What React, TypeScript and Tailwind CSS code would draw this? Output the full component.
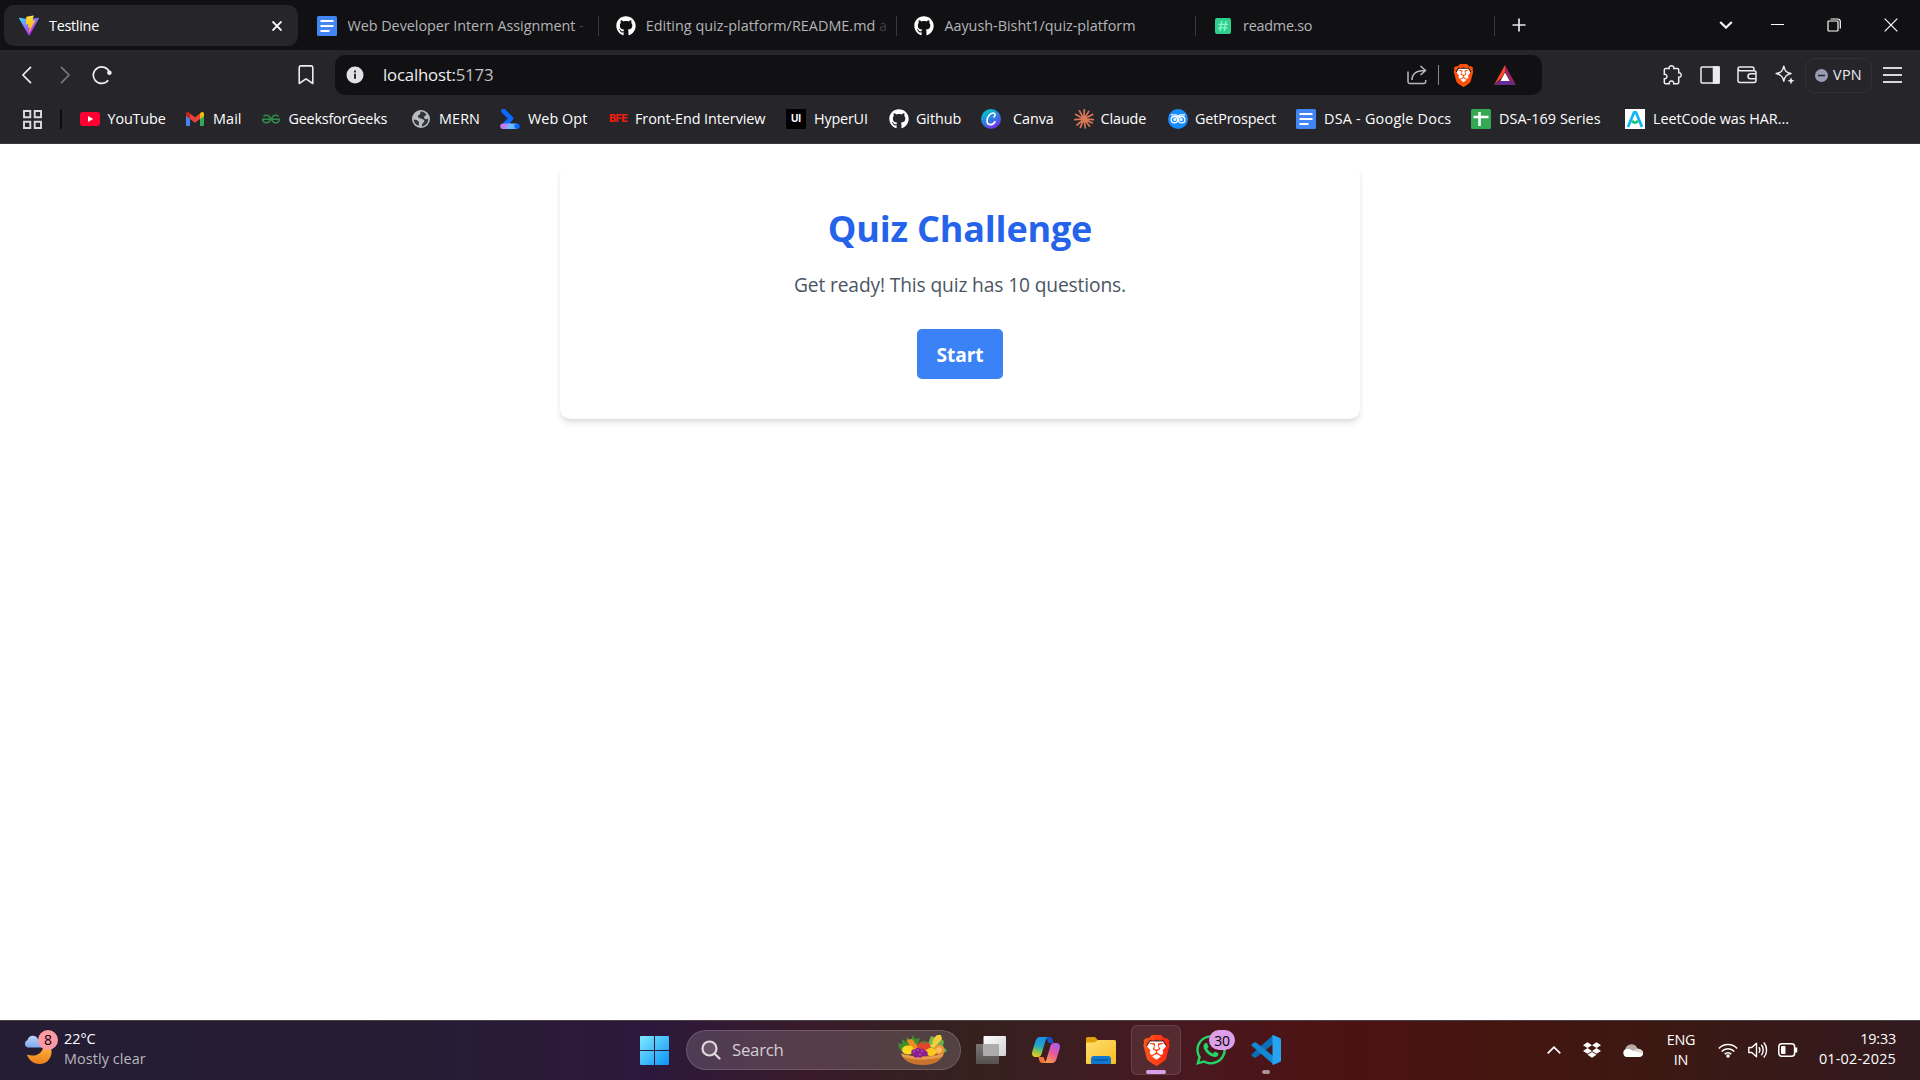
import React from 'react';
import { FaGithub, FaWhatsapp } from 'react-icons/fa';
import { SiBrave, SiDropbox, SiGeeksforgeeks } from 'react-icons/si';

const svgBase = { fill: 'none', stroke: 'currentColor' } as const;

function ViteLogo() {
  return (
    <svg viewBox="0 0 256 257" className="w-5 h-[23px] shrink-0">
      <defs>
        <linearGradient id="viteA" x1="0" x2="0.6" y1="0.1" y2="0.8">
          <stop offset="0" stopColor="#41D1FF" />
          <stop offset="1" stopColor="#BD34FE" />
        </linearGradient>
        <linearGradient id="viteB" x1="0.4" x2="0.5" y1="0" y2="1">
          <stop offset="0" stopColor="#FFEA83" />
          <stop offset="0.1" stopColor="#FFDD35" />
          <stop offset="1" stopColor="#FFA800" />
        </linearGradient>
      </defs>
      <path fill="url(#viteA)" d="M255.153 37.938 134.897 252.976c-2.483 4.44-8.862 4.466-11.382.048L.875 37.958c-2.746-4.814 1.371-10.646 6.827-9.67l120.385 21.517a6.537 6.537 0 0 0 2.322-.004l117.867-21.483c5.438-.991 9.574 4.796 6.877 9.62Z" />
      <path fill="url(#viteB)" d="M185.432.063 96.44 17.501a3.268 3.268 0 0 0-2.634 3.014l-5.474 92.456a3.268 3.268 0 0 0 3.997 3.378l24.777-5.718c2.318-.535 4.413 1.507 3.936 3.838l-7.361 36.047c-.495 2.426 1.782 4.5 4.151 3.78l15.304-4.649c2.372-.72 4.652 1.36 4.15 3.788l-11.698 56.621c-.732 3.542 3.979 5.473 5.943 2.437l1.313-2.028 72.516-144.72c1.215-2.423-.88-5.186-3.54-4.672l-25.505 4.922c-2.396.462-4.435-1.77-3.759-4.114l16.646-57.705c.677-2.35-1.37-4.583-3.769-4.113Z" />
    </svg>
  );
}

function DocsIcon() {
  return (
    <svg viewBox="0 0 20 20" className="size-5 shrink-0">
      <rect width="20" height="20" rx="1.5" fill="#4285f4" />
      <path d="M3.5 5h13M3.5 10h13M3.5 15h9" stroke="#fff" strokeWidth="2.2" />
    </svg>
  );
}

function ReadmeIcon() {
  return (
    <svg viewBox="0 0 16 16" className="size-4 shrink-0">
      <rect width="16" height="16" rx="2" fill="#2fd08f" />
      <path d="M6.7 3 5 13M11 3 9.3 13M3.5 6.3h9.3M3 9.8h9.3" stroke="#8ff5cb" strokeWidth="1.3" />
    </svg>
  );
}

function YouTubeIcon() {
  return (
    <svg viewBox="0 0 20 14" className="w-5 h-3.5 shrink-0">
      <rect width="20" height="14" rx="3" fill="#ff0033" />
      <path d="M8 4v6l5.2-3z" fill="#fff" />
    </svg>
  );
}

function GmailIcon() {
  return (
    <svg viewBox="0 0 18 14" className="w-[18px] h-3.5 shrink-0">
      <path d="M0 3v9.7c0 .7.5 1.3 1.3 1.3H4V6z" fill="#4285f4" />
      <path d="M18 3v9.7c0 .7-.5 1.3-1.3 1.3H14V6z" fill="#34a853" />
      <path d="M14 1.5V7l4-3V2c0-2-2-2.5-3.3-1.3z" fill="#fbbc04" />
      <path d="M4 7V1.5l5 3.8 5-3.8V7l-5 3.8z" fill="#ea4335" />
      <path d="M0 2v2l4 3V1.5L3.3.7C2-.5 0 0 0 2z" fill="#c5221f" />
    </svg>
  );
}

function GlobeIcon() {
  return (
    <svg viewBox="0 0 18 18" className="size-[18px] shrink-0">
      <circle cx="9" cy="9" r="9" fill="#b8bbbf" />
      <path d="M9 1.6C7.5 3 9 4.5 7 5c-1.6.4-1.3 2-.3 2.8C8 8.8 10.5 8.6 12 10c1.2 1.2-.5 2.5-1.5 3.6-.7.8-.5 2-.3 2.9 4-1 6.4-4.3 6-8-1.5 1-3.5.9-4-.5-.5-1.5 1-2.5 2.3-2.9C13.5 3 11.5 1.7 9 1.6z" fill="#34353a" />
      <path d="M1.7 9.5c2 .1 4.2.8 5 2.2.6 1 .2 2.8-.2 4C3.5 14.8 1.7 12.4 1.7 9.5z" fill="#34353a" />
    </svg>
  );
}

function WebOptIcon() {
  return (
    <svg viewBox="0 0 20 20" className="size-5 shrink-0">
      <path d="M3.5 2 11 9.500 5.5 15" fill="none" stroke="#0b6bff" strokeWidth="4.6" strokeLinejoin="round" strokeLinecap="round" />
      <path d="M3 14.500h8V20H3a2.750 2.750 0 0 1 0-5.500z" fill="#c77af5" />
      <path d="M8 14.500h9V20H6z" fill="#6cb9ff" />
      <circle cx="17" cy="17.300" r="2.700" fill="#0b6bff" />
    </svg>
  );
}

function BfeIcon() {
  return <span className="w-5 shrink-0 font-['Inter'] text-[10.5px] font-extrabold tracking-[-0.5px] text-[#f01c0c] leading-5">BFE</span>;
}

function HyperIcon() {
  return <span className="flex size-5 shrink-0 items-center justify-center bg-black font-['Inter'] text-[10px] font-bold text-white">UI</span>;
}

function CanvaIcon() {
  return (
    <svg viewBox="0 0 20 20" className="size-5 shrink-0">
      <defs>
        <linearGradient id="canva" x1="0.2" y1="0.1" x2="0.7" y2="1">
          <stop offset="0" stopColor="#00c4cc" />
          <stop offset="0.5" stopColor="#2f7be0" />
          <stop offset="1" stopColor="#7d2ae8" />
        </linearGradient>
      </defs>
      <circle cx="10" cy="10" r="10" fill="url(#canva)" />
      <path d="M13 8c1.700-1.200 1.300-4-1-4-3 0-6 4.200-6 7.800 0 5.200 5.500 4.800 8 .9" {...svgBase} stroke="#fff" strokeWidth="1.600" strokeLinecap="round" />
    </svg>
  );
}

function ClaudeIcon() {
  return (
    <svg viewBox="0 0 20 20" className="size-5 shrink-0">
      <path d="M10 10 10.3.8M10 10l4.800-7.600M10 10l8.600-4.500M10 10l9.300.6M10 10l8.200 4M10 10l5.600 7.200M10 10l1.300 9M10 10l-3.600 8.300M10 10l-7 6M10 10l-9.200.6M10 10 1.800 5.500M10 10 5.500 1.800" stroke="#d97757" strokeWidth="1.7" strokeLinecap="round" />
    </svg>
  );
}

function ProspectIcon() {
  return (
    <svg viewBox="0 0 20 20" className="size-5 shrink-0">
      <circle cx="10" cy="10" r="10" fill="#168cff" />
      <g fill="none" stroke="#fff" strokeWidth="1.3">
        <path d="M2.800 5.800h4.500c1.400 0 2.200 1 2.700 2 .5-1 1.300-2 2.700-2h4.500" />
        <circle cx="6.300" cy="10.700" r="3.200" />
        <circle cx="13.700" cy="10.700" r="3.200" />
        <circle cx="6.800" cy="10.500" r="0.900" />
        <circle cx="13.200" cy="10.500" r="0.900" />
      </g>
    </svg>
  );
}

function SheetIcon() {
  return (
    <svg viewBox="0 0 20 20" className="size-5 shrink-0">
      <rect width="20" height="20" rx="1.5" fill="#34a853" />
      <path d="M8.500 3v14M2.500 8h15" stroke="#fff" strokeWidth="2.6" />
    </svg>
  );
}

function LeetIcon() {
  return (
    <svg viewBox="0 0 20 20" className="size-5 shrink-0">
      <rect width="20" height="20" fill="#fff" />
      <path d="M3 18 9 3.500h2L17 18" fill="none" stroke="#12b5f5" strokeWidth="2.8" strokeLinejoin="round" />
      <path d="M7.200 11.500c1 2.800 4.600 2.800 5.600 0" fill="none" stroke="#16c784" strokeWidth="2.6" />
    </svg>
  );
}

function BraveLogo({ large = false }: { large?: boolean }) {
  return (
    <span className={large ? 'relative flex size-[31px] shrink-0' : 'relative flex size-[23px] shrink-0'}>
      <svg viewBox="0 0 24 24" className="absolute inset-0 size-full">
        <defs>
          <linearGradient id="brave" x1="0" y1="0" x2="1" y2="0">
            <stop offset="0" stopColor="#ff5a1c" />
            <stop offset="1" stopColor="#ff2410" />
          </linearGradient>
        </defs>
        <path d="M7 5h10l2.500 4-3 8-4.500 4-4.500-4-3-8z" fill="#fff" />
      </svg>
      <SiBrave className={large ? 'relative size-full [fill:url(#brave)]' : 'relative size-full text-[#fb4f0a]'} />
    </span>
  );
}

type Tab = { icon: React.ReactNode; title: string; cls: string; tail?: string };

const tabs: Tab[] = [
  { icon: <DocsIcon />, title: 'Web Developer Intern Assignment', tail: ' -', cls: 'ml-[10.5px] tracking-[-0.05px]' },
  { icon: <FaGithub className="size-5 shrink-0 text-white" />, title: 'Editing quiz-platform/README.md', tail: ' a', cls: 'ml-2.5 tracking-[0.02px]' },
  { icon: <FaGithub className="size-5 shrink-0 text-white" />, title: 'Aayush-Bisht1/quiz-platform', cls: 'ml-2.5 tracking-[-0.02px]' },
  { icon: <span className="w-[18px] pl-0.5"><ReadmeIcon /></span>, title: 'readme.so', cls: 'ml-[12px] tracking-[-0.25px]' },
];

function TabStrip() {
  return (
    <div className="flex h-[50px] bg-[#111113] pt-[5px] pl-1">
      <div className="flex h-[41px] w-[294px] shrink-0 items-center rounded-[10px] bg-[#26252a] pl-[15px]">
        <ViteLogo />
        <span className="ml-2.5 w-[213px] text-[14.4px] tracking-[-0.28px] text-white">Testline</span>
        <svg viewBox="0 0 10 10" className="ml-2.5 size-[10px] text-white" {...svgBase} strokeWidth="1.9"><path d="M.5.5l9 9M9.500.5l-9 9" /></svg>
      </div>
      <div className="flex h-[41px] w-[1198px] items-center pl-0.5">
        {tabs.map((t) => (
          <div key={t.title} className="flex h-5 w-[298.7px] shrink-0 items-center border-r border-[#39393d] pl-[17px]">
            {t.icon}
            <span className={`${t.cls} w-[240px] overflow-hidden whitespace-nowrap text-[14.4px] text-[#b4b4b8]`}>
              {t.title}
              {t.tail && <span className="whitespace-pre text-[#3f3f44]">{t.tail}</span>}
            </span>
          </div>
        ))}
      </div>
      <div className="flex h-10 flex-1 items-center">
        <svg viewBox="0 0 14 14" className="ml-[16px] size-3.5 text-[#e8e8ea]" {...svgBase} strokeWidth="1.7"><path d="M7 .5v13M.5 7h13" /></svg>
        <svg viewBox="0 0 14 8" className="ml-[193px] h-2 w-3.5 text-[#f2f2f4]" {...svgBase} strokeWidth="2.2"><path d="M1.200 1 7 6.600 12.800 1" /></svg>
        <span className="ml-[38px] mb-0.5 h-px w-[13px] bg-white" />
        <svg viewBox="0 0 14 14" className="ml-[43px] size-3.5 text-white" {...svgBase} strokeWidth="1.2"><rect x="1" y="3" width="10" height="10" rx="0.8" /><path d="M3.500 1h7.200A2.500 2.500 0 0 1 13.300 3.500v7" /></svg>
        <svg viewBox="0 0 14 14" className="ml-[43px] size-3.5 text-white" {...svgBase} strokeWidth="1.2"><path d="M.7.7l12.600 12.600M13.300.7.7 13.300" /></svg>
      </div>
    </div>
  );
}

function Toolbar() {
  return (
    <div className="flex h-[50px] items-center text-[#ececee]">
      <svg viewBox="0 0 10 18" className="ml-[22px] h-[18px] w-2.5" {...svgBase} strokeWidth="1.7"><path d="M9 .8.9 9 9 17.200" /></svg>
      <svg viewBox="0 0 10 18" className="ml-[28px] h-[18px] w-2.5 text-[#77767c]" {...svgBase} strokeWidth="1.7"><path d="M1 .8 9.100 9 1 17.200" /></svg>
      <svg viewBox="0 0 20 20" className="ml-[22px] size-5" {...svgBase} strokeWidth="1.7"><path d="M16.200 15.200A8.300 8.300 0 1 1 17.500 7.500" /><circle cx="17.400" cy="7.800" r="2.300" fill="currentColor" stroke="none" /></svg>
      <svg viewBox="0 0 16 20" className="ml-[186px] h-5 w-4" {...svgBase} strokeWidth="1.6"><path d="M1.200 2.500A1.700 1.700 0 0 1 2.900.9h10.200a1.700 1.700 0 0 1 1.700 1.600V18.500L8 13.800 1.200 18.500z" strokeLinejoin="round" /></svg>
      <div className="ml-[21px] flex h-10 w-[1207px] shrink-0 items-center rounded-[10px] bg-[#111113] pl-[11px]">
        <svg viewBox="0 0 18 18" className="size-[18px]"><circle cx="9" cy="9" r="8.5" fill="#e2e1e8" /><path d="M9 7.800v5M9 4.600v1.900" stroke="#222" strokeWidth="1.9" /></svg>
        <span className="ml-[19px] w-[1024px] text-[16.8px] tracking-[-0.2px] text-[#ededf0]">localhost:<span className="text-[#c2c2c8]">5173</span></span>
        <svg viewBox="0 0 20 20" className="size-5 text-[#b9b9bd]" {...svgBase} strokeWidth="1.5"><path d="M1 6.500v10.300c0 1 .7 1.700 1.700 1.700H17c1 0 1.700-.7 1.700-1.700V15" /><path d="M5 15c0-5 3.500-9.300 12.500-9.500M13.500 1l5 4.500-5 4.500" /></svg>
        <span className="ml-[11px] h-5 w-px bg-[#88888c]" />
        <span className="ml-[13px]"><BraveLogo /></span>
        <svg viewBox="0 0 22 20" className="ml-[19px] h-5 w-[22px]"><path d="M11 0v7L7.500 13 0 20z" fill="#ff4724" /><path d="M11 0v7l3.700 8L22 20z" fill="#9e1f63" /><path d="M0 20h22l-7.300-5.500H7.300z" fill="#662d91" /><path d="M11 7.500 6.500 16h9z" fill="#fff" /></svg>
      </div>
      <svg viewBox="0 0 20 20" className="ml-[120px] size-5" {...svgBase} strokeWidth="1.5"><path d="M3.500 3.500h3.700C6.700 1.900 8 .8 9.500.8s2.800 1.100 2.300 2.700h3.700c.7 0 1.200.5 1.200 1.200v3.100c1.400-.3 2.500.8 2.500 2.200s-1.100 2.500-2.500 2.200v5.300c0 .7-.5 1.200-1.200 1.200h-3.800c.4-1.600-.7-2.600-2.200-2.600s-2.600 1-2.200 2.600H3.500c-.7 0-1.200-.5-1.200-1.200v-3.800c1.600.3 2.600-.8 2.600-2.200S3.900 9 2.300 9.400V4.700c0-.7.5-1.200 1.200-1.200z" /></svg>
      <svg viewBox="0 0 20 20" className="ml-[18px] size-5" {...svgBase} strokeWidth="1.5"><rect x="1" y="2" width="18" height="16" rx="1" /><path d="M13.500 2H19v16h-5.500z" fill="currentColor" /></svg>
      <svg viewBox="0 0 20 20" className="ml-[17px] size-5" {...svgBase} strokeWidth="1.5"><path d="M1 3.500v12c0 1.200.8 2 2 2h14c1 0 2-.8 2-2v-8c0-1-.7-1.800-2-1.800H3c-1.200 0-2-.8-2-2.200 0-1 .8-1.500 1.800-1.500H15c1.200 0 1.900.7 1.900 1.700v2" /><path d="M19 8.800h-5.500a2.400 2.400 0 0 0 0 5H19" /></svg>
      <svg viewBox="0 0 20 20" className="ml-[18px] size-5" {...svgBase} strokeWidth="1.5"><path d="M8.800 1.200c.8 4.600 2.400 6.300 7.200 7.400-4.800 1.100-6.400 3-7.200 7.600-.9-4.600-2.600-6.500-7.600-7.600 5-1.100 6.700-2.800 7.600-7.400z" strokeLinejoin="round" /><path d="M16 12.300l1 2.500 2.500 1-2.500 1-1 2.700-1-2.700-2.500-1 2.500-1z" fill="currentColor" stroke="none" /></svg>
      <div className="ml-[10px] flex h-[35px] w-[67px] items-center rounded-[10px] border border-[#323137] pl-[9px]">
        <svg viewBox="0 0 13 13" className="size-[13px]"><circle cx="6.5" cy="6.5" r="6.5" fill="#9a9bb4" /><path d="M3 6.500h7" stroke="#26252a" strokeWidth="1.5" /></svg>
        <span className="ml-[5px] text-[14.4px] tracking-[0.3px] text-[#ececee]">VPN</span>
      </div>
      <div className="ml-[11px] flex w-[19px] flex-col gap-[5px]">
        <span className="h-0.5 bg-[#d8d8db]" />
        <span className="h-0.5 bg-[#d8d8db]" />
        <span className="h-0.5 bg-[#d8d8db]" />
      </div>
    </div>
  );
}

const bookmarks: { icon: React.ReactNode; label: string; slot: string; text: string }[] = [
  { icon: <YouTubeIcon />, label: 'YouTube', slot: 'w-[106px]', text: 'ml-[7.5px] tracking-[-0.15px]' },
  { icon: <GmailIcon />, label: 'Mail', slot: 'w-[76px]', text: 'ml-[9px] tracking-[0.1px]' },
  { icon: <SiGeeksforgeeks className="size-[18px] shrink-0 text-[#2f8d46]" />, label: 'GeeksforGeeks', slot: 'w-[150px]', text: 'ml-[8.5px] tracking-[-0.22px]' },
  { icon: <GlobeIcon />, label: 'MERN', slot: 'w-[88px]', text: 'ml-[9px] tracking-[0.1px]' },
  { icon: <WebOptIcon />, label: 'Web Opt', slot: 'w-[109px]', text: 'ml-2 tracking-[0.05px]' },
  { icon: <BfeIcon />, label: 'Front-End Interview', slot: 'w-[177px]', text: 'ml-[6px] tracking-[-0.08px]' },
  { icon: <HyperIcon />, label: 'HyperUI', slot: 'w-[103px]', text: 'ml-[8px] tracking-[-0.2px]' },
  { icon: <FaGithub className="size-5 shrink-0 text-white" />, label: 'Github', slot: 'w-[92px]', text: 'ml-[7px] tracking-[-0.1px]' },
  { icon: <CanvaIcon />, label: 'Canva', slot: 'w-[93px]', text: 'ml-[12px] tracking-[-0.05px]' },
  { icon: <ClaudeIcon />, label: 'Claude', slot: 'w-[94px]', text: 'ml-[6.5px] tracking-[-0.1px]' },
  { icon: <ProspectIcon />, label: 'GetProspect', slot: 'w-[128px]', text: 'ml-[7px] tracking-[-0.15px]' },
  { icon: <DocsIcon />, label: 'DSA - Google Docs', slot: 'w-[175px]', text: 'ml-[8px] tracking-[0.23px]' },
  { icon: <SheetIcon />, label: 'DSA-169 Series', slot: 'w-[154px]', text: 'ml-[8px] tracking-[0.05px]' },
  { icon: <LeetIcon />, label: 'LeetCode was HAR...', slot: 'w-[170px]', text: 'ml-[8px] tracking-[-0.05px]' },
];

function BookmarkBar() {
  return (
    <div className="flex h-[44px] items-center border-b border-[#38373c] pb-[5px] text-[14.4px] text-white">
      <svg viewBox="0 0 19 19" className="ml-[23px] size-[19px] text-[#dcdce0]" {...svgBase} strokeWidth="1.9"><path d="M1 1h6.300v6.300H1zM11.700 1H18v6.300h-6.300zM1 11.700h6.300V18H1zM11.700 11.700H18V18h-6.300z" /></svg>
      <span className="ml-[18px] mr-[18px] h-5 w-0.5 rounded bg-[#0d0d0f]" />
      {bookmarks.map((b) => (
        <div key={b.label} className={`${b.slot} flex shrink-0 items-center`}>
          {b.icon}
          <span className={`${b.text} whitespace-nowrap`}>{b.label}</span>
        </div>
      ))}
    </div>
  );
}

function WeatherIcon() {
  return (
    <div className="relative h-[36px] w-[36px]">
      <svg viewBox="0 0 36 36" className="size-full">
        <defs>
          <linearGradient id="moon" x1="0" y1="0" x2="0" y2="1"><stop offset="0" stopColor="#f9b43a" /><stop offset="1" stopColor="#ee7d1c" /></linearGradient>
          <linearGradient id="wcloud" x1="0" y1="0" x2="0" y2="1"><stop offset="0" stopColor="#b9d3fb" /><stop offset="1" stopColor="#7fa9f0" /></linearGradient>
        </defs>
        <path d="M28 17c2.500 9.500-3 17-11.500 17-6 0-11-4-12.500-9.500 6 2.500 14 1 16-6.500z" fill="url(#moon)" />
        <path d="M4.500 17.500a4 4 0 0 1 0-7.500A5.500 5.500 0 0 1 15 9.500c4 0 5 3 5 8z" fill="url(#wcloud)" />
      </svg>
      <span className="absolute left-[15px] top-0 flex size-5 items-center justify-center rounded-full bg-[#ff99a4] text-[14px] text-black">8</span>
    </div>
  );
}

function Bowl() {
  return (
    <svg viewBox="0 0 50 32" className="h-8 w-[50px]">
      <path d="M2 14l-1-4 4 1 0-5 4 3 1-5 4 3 2-5 2 4 5-1-2 7-8 8-9-2z" fill="#3f8f2e" />
      <path d="M33 8l6-5 8 5-1 5 4 5-7 4-10-4z" fill="#6bb04a" />
      <path d="M10 7l5-1 7 9-6 5z" fill="#f28a22" />
      <path d="M30 13 40 2l4 0 1 4-8 9z" fill="#f5cf3d" />
      <path d="M31 11 34 3l3 1-2 8z" fill="#7cba4c" />
      <ellipse cx="27" cy="13.500" rx="6.500" ry="5" fill="#e0452f" />
      <path d="M27 11l-3-3 3 1 1-2 1 2 3-1z" fill="#3f8f2e" />
      <ellipse cx="11" cy="17" rx="6" ry="4.500" fill="#fbd81f" />
      <circle cx="42" cy="17" r="5" fill="#f59331" />
      <circle cx="42" cy="17" r="2.800" fill="#fcc069" />
      <path d="M4 21c8 3 34 3 43-1-3 8-9 12-21 12S7 28 4 21z" fill="#c8742d" />
      <path d="M4 20c10 5 33 5 43 0l-1.500 3.500c-9 4-31 4-40 0z" fill="#e79c4f" />
      <ellipse cx="34" cy="19" rx="5.500" ry="4" fill="#fdc81c" />
      <g fill="#8d1f8f"><circle cx="17" cy="19" r="2.700" /><circle cx="21" cy="17.500" r="2.700" /><circle cx="25" cy="18.500" r="2.700" /><circle cx="19" cy="22" r="2.700" /><circle cx="23" cy="22" r="2.700" /><circle cx="28" cy="20.500" r="2.700" /></g>
      <g fill="#b74bbd"><circle cx="17" cy="18.500" r="1" /><circle cx="21" cy="17" r="1" /><circle cx="25" cy="18" r="1" /><circle cx="23" cy="21.500" r="1" /></g>
    </svg>
  );
}

function StartLogo() {
  return (
    <svg viewBox="0 0 29 29" className="ml-[3px] size-[29px]">
      <defs><linearGradient id="win" x1="0" y1="0" x2="29" y2="29" gradientUnits="userSpaceOnUse"><stop offset="0" stopColor="#7feaff" /><stop offset="1" stopColor="#0a93f5" /></linearGradient></defs>
      <path d="M0 1q0-1 1-1h13v14H0zM15 0h13q1 0 1 1v13H15zM0 15h14v14H1q-1 0-1-1zM15 15h14v13q0 1-1 1H15z" fill="url(#win)" />
    </svg>
  );
}

function TaskViewIcon() {
  return (
    <svg viewBox="0 0 30 28" className="h-7 w-[30px]">
      <defs>
        <linearGradient id="tv1" x1="0" y1="0" x2="1" y2="1"><stop offset="0" stopColor="#fff" /><stop offset="1" stopColor="#d0d0d0" /></linearGradient>
        <linearGradient id="tv2" x1="0" y1="0" x2="0" y2="1"><stop offset="0" stopColor="#7a7676" /><stop offset="1" stopColor="#565151" /></linearGradient>
      </defs>
      <rect x="0" y="8" width="23" height="20" rx="1" fill="url(#tv2)" />
      <rect x="7.500" y="0" width="22.500" height="20" rx="1" fill="url(#tv1)" />
      <path d="M7.500 8H23v12H7.500z" fill="#adabab" />
    </svg>
  );
}

function CopilotIcon() {
  return (
    <svg viewBox="0 0 28 26" className="h-[26px] w-7">
      <defs>
        <linearGradient id="cpA" x1="0.5" y1="0" x2="0.3" y2="1"><stop offset="0" stopColor="#1a8fe8" /><stop offset="0.450" stopColor="#27a5c8" /><stop offset="0.7" stopColor="#7cc25a" /><stop offset="1" stopColor="#f2c91c" /></linearGradient>
        <linearGradient id="cpB" x1="0.8" y1="0" x2="0.3" y2="1"><stop offset="0" stopColor="#a55cf2" /><stop offset="0.5" stopColor="#e7579b" /><stop offset="1" stopColor="#fb9a4b" /></linearGradient>
      </defs>
      <path d="M14 0h3.500c1.800 0 2.500 1 3 2.800L21.500 6h-5z" fill="#1953c9" />
      <path d="M14 26h-3.500c-2 0-2.800-1.200-3.300-3l-.7-3h5z" fill="#f4743b" />
      <path d="M8 0h8c-1.400.6-2 2-2.600 4l-3.700 12.500C9 19 8 20 6 20H3.500C.5 20-.5 17.500.3 14.600L3.500 4C4.400 1.200 5.800 0 8 0z" fill="url(#cpA)" />
      <path d="M20 26h-8c1.400-.6 2-2 2.600-4l3.700-12.500C19 7 20 6 22 6h2.500c3 0 4 2.500 3.200 5.400L24.500 22c-.9 2.800-2.300 4-4.500 4z" fill="url(#cpB)" />
    </svg>
  );
}

function FolderIcon() {
  return (
    <svg viewBox="0 0 30 27" className="h-[27px] w-[30px]">
      <defs><linearGradient id="fold" x1="0" y1="0" x2="1" y2="1"><stop offset="0" stopColor="#ffdf71" /><stop offset="1" stopColor="#f9bd21" /></linearGradient></defs>
      <path d="M0 1.500Q0 0 1.500 0H9l3 3h16v6H0z" fill="#dfa00b" />
      <path d="M0 5.500h8.500L12 3h16.500q1.500 0 1.500 1.500V26q0 1-1 1H1q-1 0-1-1z" fill="url(#fold)" />
      <path d="M5 27v-5q0-3 3-3h14q3 0 3 3v5z" fill="#1079cf" />
      <path d="M8 23h14" stroke="#0a4f96" strokeWidth="1.2" />
    </svg>
  );
}

function CodeIcon() {
  return (
    <svg viewBox="0 0 30 30" className="size-[30px]">
      <path d="M22 0 1 19q-1 1 0 2l2 1.500q1 .6 2 0L23.500 8z" fill="#0a6fb8" />
      <path d="M23 30 1 11q-1-1 0-2l2-1.500q1-.6 2 0L23.500 22z" fill="#1287d4" />
      <path d="M22 0l7 3q1 .5 1 1.500v21q0 1-1 1.500l-7 3q-.5-.3-.5-1V1q0-.8.500-1z" fill="#27a4f3" />
    </svg>
  );
}

function Taskbar() {
  return (
    <div className="flex h-[60px] items-center border-t border-[#4b4347] bg-[linear-gradient(90deg,#241d33_0%,#261c34_22%,#2d183b_34%,#3a1b2b_42%,#35211f_50%,#3b1e20_55%,#491820_62%,#4c1314_68%,#461510_78%,#3c1812_86%,#321a1f_100%)] pb-px">
      <div className="flex w-[637px] items-center pl-[23px]">
        <div className="mb-[5px]"><WeatherIcon /></div>
        <div className="mb-0.5 ml-[5px] text-[14.4px] leading-5">
          <div className="text-white">22°C</div>
          <div className="tracking-[0.1px] text-[#bab6bd]">Mostly clear</div>
        </div>
      </div>
      <StartLogo />
      <div className="ml-[17px] flex h-10 w-[275px] items-center rounded-full border border-white/15 bg-white/15 pl-3.5">
        <svg viewBox="0 0 20 20" className="size-5 text-[#dedadd]" {...svgBase} strokeWidth="2.2"><circle cx="8.5" cy="8.5" r="7" fill="#ffffff22" /><path d="M13.500 13.500l5 5" strokeLinecap="round" /></svg>
        <span className="ml-[11px] w-[165px] text-[16.8px] tracking-[-0.25px] text-[#d5ced2]">Search</span>
        <div className="mb-0.5"><Bowl /></div>
      </div>
      <div className="flex items-center">
        <div className="ml-[15px]"><TaskViewIcon /></div>
        <div className="ml-[26px]"><CopilotIcon /></div>
        <div className="ml-[26px]"><FolderIcon /></div>
        <div className="relative ml-[15px] flex h-[50px] w-[50px] items-center justify-center rounded-md border border-white/10 bg-white/8">
          <BraveLogo large />
          <span className="absolute bottom-0 left-[14px] h-1 w-5 rounded-full bg-[#dba0e8]" />
        </div>
        <div className="relative ml-[13px]">
          <FaWhatsapp className="size-[34px] text-[#25d366]" />
          <span className="absolute -top-[3px] left-[15px] flex h-5 w-[26px] items-center justify-center rounded-full bg-[#dc9fe8] text-[14px] tracking-[-0.2px] text-black">30</span>
        </div>
        <div className="relative ml-[23px]">
          <CodeIcon />
          <span className="absolute -bottom-[9px] left-[11px] h-1 w-2 rounded-full bg-[#a89395]" />
        </div>
      </div>
      <div className="ml-auto flex items-center pr-6 text-white">
        <svg viewBox="0 0 14 8" className="h-2 w-3.5" {...svgBase} strokeWidth="1.7"><path d="M.7 7.300 7 1.200l6.300 6.100" /></svg>
        <SiDropbox className="ml-[22px] size-[18px]" />
        <svg viewBox="0 0 20 13" className="ml-[22px] h-[13px] w-5"><path d="M3 9a6 6 0 0 1 6-8.800c3 .2 4.500 2 5.200 3.800L20 7v4z" fill="#b9a9a7" /><path d="M4 13a4 4 0 0 1-.5-7.900C6 4.200 8 5.500 10 7l3-1.500c3-1.500 7 .5 7 4 0 2-1.500 3.500-3.500 3.500z" fill="#fff" /><path d="M10 7l3-1.500c3-1.500 7 .5 7 4z" fill="#ded6d5" /></svg>
        <div className="ml-[22px] w-8 text-center text-[14.4px] leading-5 tracking-[-0.2px]"><div>ENG</div><div>IN</div></div>
        <svg viewBox="0 0 20 16" className="ml-[21px] h-4 w-5" {...svgBase} strokeWidth="1.6"><path d="M.8 6.500a12.500 12.500 0 0 1 18.400 0M3.700 9.500a8.500 8.500 0 0 1 12.600 0M6.700 12.200a4.600 4.600 0 0 1 6.600 0" /><circle cx="10" cy="14" r="1.800" fill="currentColor" stroke="none" /></svg>
        <svg viewBox="0 0 20 18" className="ml-2.5 h-[18px] w-5" {...svgBase} strokeWidth="1.4"><path d="M.8 6.500h3L8.500 2.200v13.600L3.800 11.500h-3z" strokeLinejoin="round" /><path d="M10.800 6.200a4.500 4.500 0 0 1 0 5.600M13.300 3.800a8 8 0 0 1 0 10.400M15.800 1.500a11.500 11.500 0 0 1 0 15" /></svg>
        <svg viewBox="0 0 20 14" className="ml-2.5 h-3.5 w-5" {...svgBase} strokeWidth="1.5"><rect x="0.8" y="0.8" width="15.8" height="12.4" rx="3" /><rect x="3" y="3" width="4.5" height="8" rx="1" fill="currentColor" stroke="none" /><path d="M18 4.500v5" strokeWidth="2.5" /></svg>
        <div className="mb-0.5 ml-[20px] w-[78px] whitespace-nowrap text-right text-[14.4px] leading-5"><div className="tracking-[-0.2px]">19:33</div><div className="tracking-[0.2px]">01-02-2025</div></div>
      </div>
    </div>
  );
}

export default function App() {
  return (
    <div className="flex h-[1080px] w-[1920px] flex-col overflow-hidden bg-white font-['Open_Sans',sans-serif]">
      <header className="flex h-[144px] shrink-0 flex-col bg-[#26252a]">
        <TabStrip />
        <Toolbar />
        <BookmarkBar />
      </header>
      <main className="flex-1 bg-white">
        <section className="mx-auto mt-5 flex h-[255px] w-[800px] flex-col items-center rounded-[10px] bg-white pt-[42px] shadow-[0_5px_7.5px_-1.25px_rgba(0,0,0,0.1),0_2.5px_5px_-2.5px_rgba(0,0,0,0.1)]">
          <h1 className="text-[36px] leading-[45px] font-bold tracking-[-0.2px] text-[#2563eb]">Quiz Challenge</h1>
          <p className="mt-[19px] text-[19.2px] leading-[30px] tracking-[-0.13px] text-[#4b5563]">Get ready! This quiz has 10 questions.</p>
          <button className="mt-[29px] h-[50px] w-[86px] rounded-[5px] bg-[#3b82f6] pt-0.5 text-[19.2px] font-bold tracking-[-0.15px] text-white">Start</button>
        </section>
      </main>
      <Taskbar />
    </div>
  );
}
